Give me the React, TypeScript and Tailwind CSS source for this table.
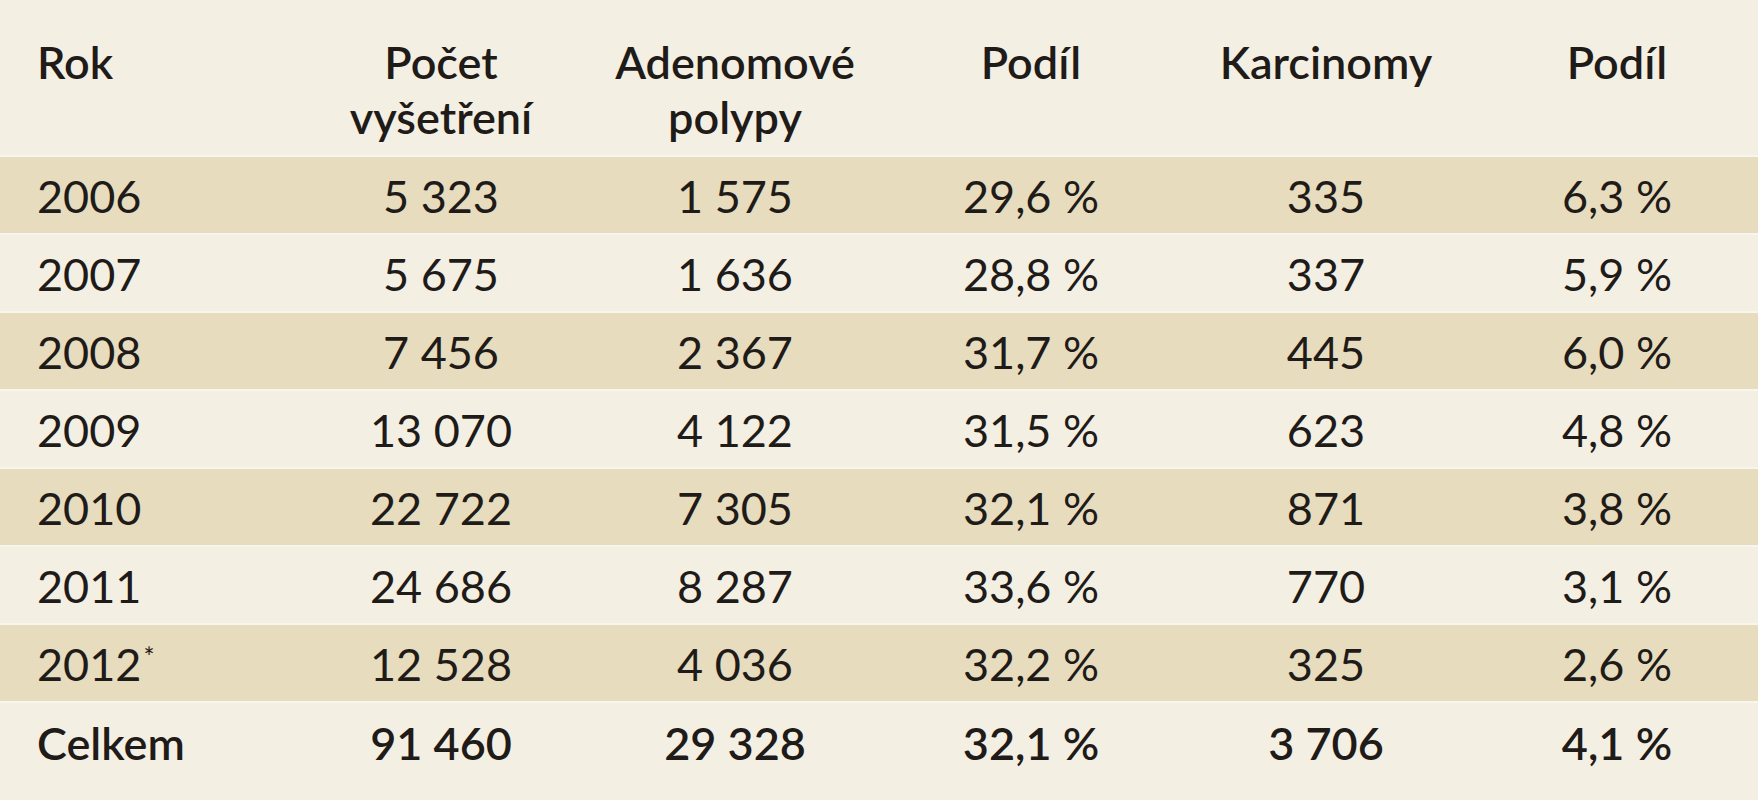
import React from "react";

type Row = {
  year: string;
  note?: boolean;
  exams: string;
  adenomas: string;
  adenomaShare: string;
  carcinomas: string;
  carcinomaShare: string;
};

const rows: Row[] = [
  { year: "2006", exams: "5 323", adenomas: "1 575", adenomaShare: "29,6 %", carcinomas: "335", carcinomaShare: "6,3 %" },
  { year: "2007", exams: "5 675", adenomas: "1 636", adenomaShare: "28,8 %", carcinomas: "337", carcinomaShare: "5,9 %" },
  { year: "2008", exams: "7 456", adenomas: "2 367", adenomaShare: "31,7 %", carcinomas: "445", carcinomaShare: "6,0 %" },
  { year: "2009", exams: "13 070", adenomas: "4 122", adenomaShare: "31,5 %", carcinomas: "623", carcinomaShare: "4,8 %" },
  { year: "2010", exams: "22 722", adenomas: "7 305", adenomaShare: "32,1 %", carcinomas: "871", carcinomaShare: "3,8 %" },
  { year: "2011", exams: "24 686", adenomas: "8 287", adenomaShare: "33,6 %", carcinomas: "770", carcinomaShare: "3,1 %" },
  { year: "2012", note: true, exams: "12 528", adenomas: "4 036", adenomaShare: "32,2 %", carcinomas: "325", carcinomaShare: "2,6 %" },
];

// column centers: 441, 735, 1031, 1326, 1617
const grid = "grid grid-cols-[320px_242px_346px_246px_344px_238px]";

export default function App() {
  return (
    <div
      className="w-[1758px] h-[800px] bg-[#f4efe3] text-[#1f1b18] text-[45px] leading-[55px] overflow-hidden"
      style={{ fontFamily: 'Lato, "Open Sans", sans-serif' }}
    >
      {/* header */}
      <div className={`${grid} h-[157px] pt-[35px] border-b-2 border-[#f8f5ee] font-semibold`}>
        <div className="pl-[37px]">Rok</div>
        <div className="text-center">
          <div>Počet</div>
          <div>vyšetření</div>
        </div>
        <div className="text-center">
          <div>Adenomové</div>
          <div>polypy</div>
        </div>
        <div className="text-center">Podíl</div>
        <div className="text-center">Karcinomy</div>
        <div className="text-center">Podíl</div>
      </div>

      {rows.map((r, i) => (
        <div
          key={r.year}
          className={`${grid} h-[78px] pt-[3px] items-center border-b-2 border-[#f8f5ee] ${
            i % 2 === 0 ? "bg-[#e7dcbe]" : ""
          }`}
        >
          <div className="pl-[37px]">
            {r.year}
            {r.note && (
              <span className="relative -top-[14px] ml-[2px] text-[26px] leading-none">*</span>
            )}
          </div>
          <div className="text-center">{r.exams}</div>
          <div className="text-center">{r.adenomas}</div>
          <div className="text-center">{r.adenomaShare}</div>
          <div className="text-center">{r.carcinomas}</div>
          <div className="text-center">{r.carcinomaShare}</div>
        </div>
      ))}

      {/* totals */}
      <div className={`${grid} h-[78px] pt-[3px] items-center font-semibold`}>
        <div className="pl-[37px]">Celkem</div>
        <div className="text-center">91 460</div>
        <div className="text-center">29 328</div>
        <div className="text-center">32,1 %</div>
        <div className="text-center">3 706</div>
        <div className="text-center">4,1 %</div>
      </div>
    </div>
  );
}
